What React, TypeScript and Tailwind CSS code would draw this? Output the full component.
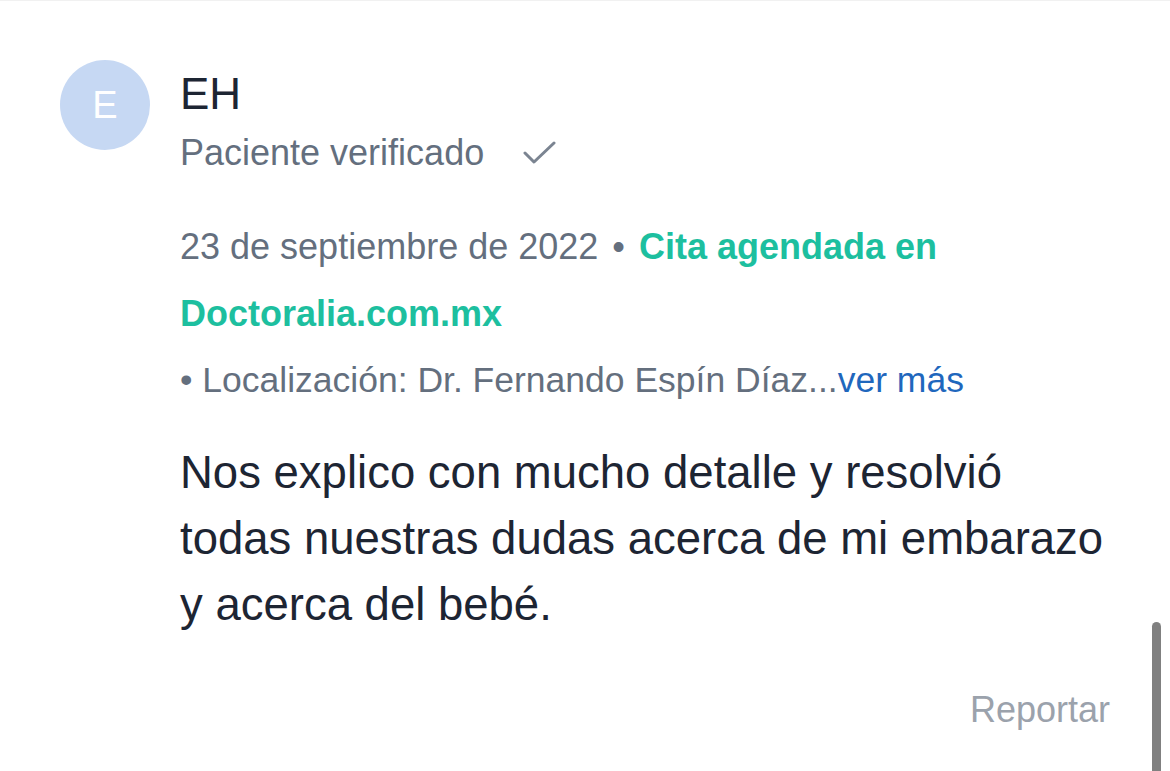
import React from "react";

function CheckIcon() {
  return (
    <svg width="34" height="26" viewBox="0 0 34 26" fill="none" className="ml-[38px]">
      <path
        d="M3 13 L12 22 L32 3"
        stroke="#7b8491"
        strokeWidth="3"
        strokeLinecap="round"
        strokeLinejoin="round"
      />
    </svg>
  );
}

export default function App() {
  return (
    <div className="relative w-[1170px] h-[771px] overflow-hidden bg-white border-t border-[#f1f1f1] font-['Liberation_Sans',Arial,sans-serif]">
      <div className="flex items-start gap-[30px] pl-[60px] pt-[59px] pr-[60px]">
        <div className="flex h-[90px] w-[90px] shrink-0 items-center justify-center rounded-full bg-[#c6d8f3] text-[38px] text-white">
          E
        </div>

        <div className="flex flex-1 flex-col pt-[10px]">
          <p className="text-[44px] leading-[48px] text-[#1d2533]">EH</p>
          <div className="mt-[13px] flex items-center">
            <span className="text-[36px] leading-[44px] text-[#646f7e]">Paciente verificado</span>
            <CheckIcon />
          </div>

          <p className="mt-[38px] text-[36px] leading-[67px] text-[#646f7e]">
            23 de septiembre de 2022 <span className="mx-[4px]">•</span>{" "}
            <span className="font-bold text-[#1dbf9f]">
              Cita agendada en
              <br />
              Doctoralia.com.mx
            </span>
          </p>
          <p className="text-[35.5px] leading-[66px] text-[#646f7e]">
            • Localización: Dr. Fernando Espín Díaz...
            <span className="text-[#1f67bd]">ver más</span>
          </p>

          <p className="mt-[27px] text-[45.5px] leading-[66px] text-[#1d2533]">
            Nos explico con mucho detalle y resolvió
            <br />
            todas nuestras dudas acerca de mi embarazo
            <br />y acerca del bebé.
          </p>

          <div className="mt-[50px] flex justify-end">
            <span className="text-[36px] leading-[44px] text-[#9ba2ac]">Reportar</span>
          </div>
        </div>
      </div>

      {/* scrollbar thumb */}
      <div className="absolute left-[1152px] top-[621px] h-[170px] w-[9px] rounded-full bg-[#808080]" />
    </div>
  );
}
